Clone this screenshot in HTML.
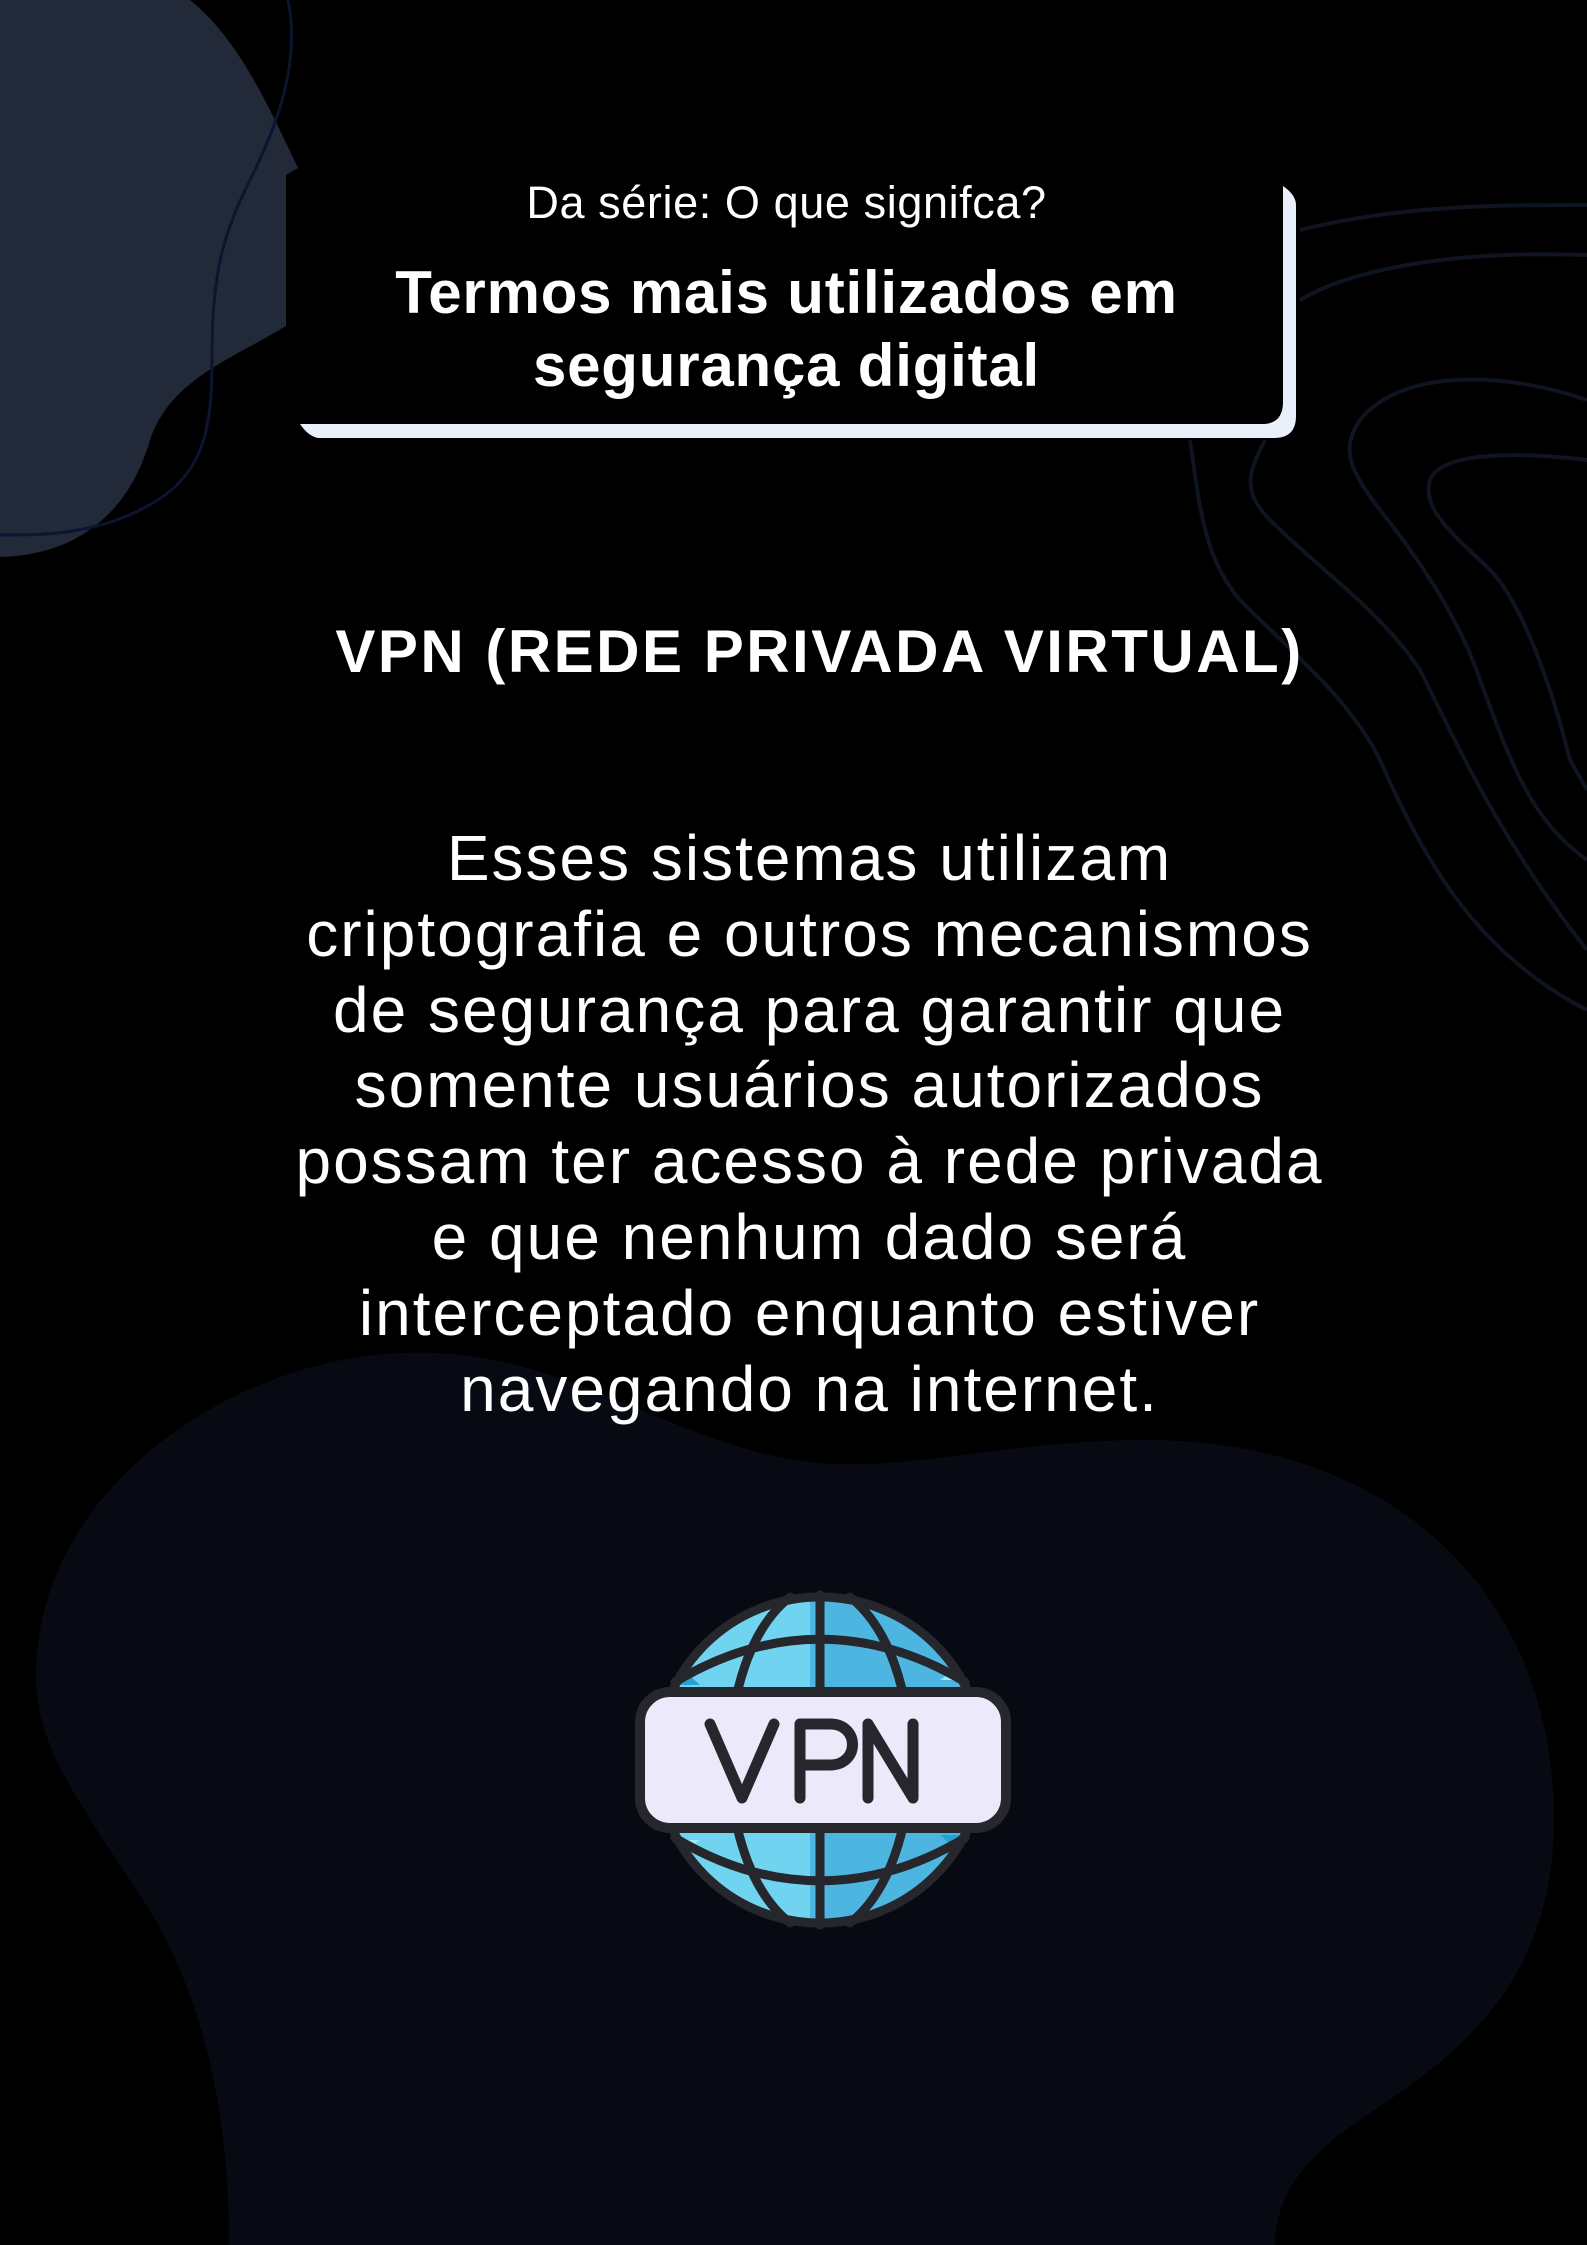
<!DOCTYPE html>
<html><head><meta charset="utf-8"><style>
html,body{margin:0;padding:0;background:#000;}
body{width:1587px;height:2245px;position:relative;overflow:hidden;font-family:"Liberation Sans",sans-serif;color:#fff;}
.abs{position:absolute;left:0;width:1587px;text-align:center;}
</style></head><body>
<svg width="1587" height="2245" style="position:absolute;left:0;top:0">
<path d="M400,1353 C560,1345 660,1440 802,1461 C900,1475 1000,1440 1146,1440 C1400,1440 1554,1600 1554,1819 C1554,1990 1450,2060 1360,2120 C1300,2160 1275,2200 1275,2245 L229,2245 C229,2100 200,1980 130,1880 C70,1790 36,1740 36,1676 C36,1490 230,1360 400,1353 Z" fill="#070a12"/>
<path d="M0,0 L190,0 C240,40 270,110 298,168 L286,175 L286,326 C230,360 170,380 150,440 C130,510 80,555 0,557 Z" fill="#222a39"/>
<path d="M288,0 C300,60 280,120 250,180 C220,240 212,280 212,360 C212,440 200,480 140,510 C90,535 40,535 0,535" fill="none" stroke="#0c1430" stroke-width="3"/>
<g fill="none" stroke="#0f1421" stroke-width="4">
<path d="M1300,230 C1400,205 1500,205 1587,205"/>
<path d="M1300,300 C1350,270 1450,250 1587,255"/>
<path d="M1190,440 C1200,510 1205,560 1240,600 C1300,660 1350,700 1380,760 C1420,850 1470,950 1587,1010"/>
<path d="M1265,440 C1250,470 1240,490 1270,520 C1320,570 1380,610 1420,670 C1460,750 1500,840 1587,950"/>
<path d="M1587,400 C1500,370 1400,370 1360,420 C1340,450 1350,470 1380,510 C1420,560 1460,620 1480,680 C1510,760 1530,820 1587,860"/>
<path d="M1587,460 C1500,450 1440,455 1430,480 C1420,510 1460,540 1490,570 C1520,600 1550,680 1570,760 L1587,790"/>
</g>
<rect x="286" y="172" width="997" height="250" rx="22" fill="#000"/>
<path d="M1283,186 Q1296,195 1296,205 L1296,416 Q1296,438 1274,438 L318,438 Q308,436 300,424 L1262,424 Q1283,424 1283,402 Z" fill="#e9f0fc"/>
<g transform="translate(820,1760)">
<clipPath id="c"><circle r="163"/></clipPath>
<g clip-path="url(#c)">
<rect x="-170" y="-170" width="340" height="340" fill="#4cb6e0"/>
<path d="M-10,-170 L-10,170 L-170,170 L-170,-170 Z" fill="#70d3f0"/>
<path d="M-170,-120 L-120,-120 L-80,-170 Z M170,120 L120,120 L80,170 Z" fill="#9aeafc"/>
<path d="M-170,-75 L-120,-75 L-170,-120 Z M170,75 L120,75 L170,120Z" fill="#26a0d0"/>
<path d="M-170,120 L-120,120 L-80,170 Z M170,-120 L120,-120 L80,-170 Z" fill="#26a0d0"/>
<path d="M170,-80 L120,-80 L170,-115 Z M-170,80 L-120,80 L-170,115 Z" fill="#9aeafc"/>
</g>
<g fill="none" stroke="#26272c" stroke-width="9" stroke-linecap="round">
<circle r="163"/>
<line x1="0" y1="-165" x2="0" y2="165"/>
<path d="M-30,-163 C-110,-100 -110,100 -30,163"/>
<path d="M30,-163 C110,-100 110,100 30,163"/>
<path d="M-145,-78 C-50,-135 50,-135 145,-78"/>
<path d="M-145,78 C-50,135 50,135 145,78"/>
</g>
<rect x="-180" y="-68" width="366" height="136" rx="30" fill="#ebe9fa" stroke="#26272c" stroke-width="10"/>
<g fill="none" stroke="#26272c" stroke-width="11" stroke-linecap="round" stroke-linejoin="round">
<path d="M-110,-36 L-78,38 L-46,-36"/>
<path d="M-20,38 L-20,-36 L10,-36 C40,-36 40,5 10,5 L-20,5"/>
<path d="M48,38 L48,-36 L93,38 L93,-36"/>
</g>
</g>
</svg>
<div class="abs" style="top:176px;font-size:45px;line-height:54px;left:-7px;letter-spacing:0.6px;">Da série: O que signifca?</div>
<div class="abs" style="top:256px;font-size:60px;line-height:73px;font-weight:bold;left:-7px;letter-spacing:0.8px;">Termos mais utilizados em<br>segurança digital</div>
<div class="abs" style="top:618px;font-size:60px;line-height:68px;font-weight:bold;left:26px;letter-spacing:2.5px;">VPN (REDE PRIVADA VIRTUAL)</div>
<div class="abs" style="top:821px;font-size:64px;line-height:75.8px;left:16px;letter-spacing:2px;">Esses sistemas utilizam<br>criptografia e outros mecanismos<br>de segurança para garantir que<br>somente usuários autorizados<br>possam ter acesso à rede privada<br>e que nenhum dado será<br>interceptado enquanto estiver<br>navegando na internet.</div>
</body></html>
